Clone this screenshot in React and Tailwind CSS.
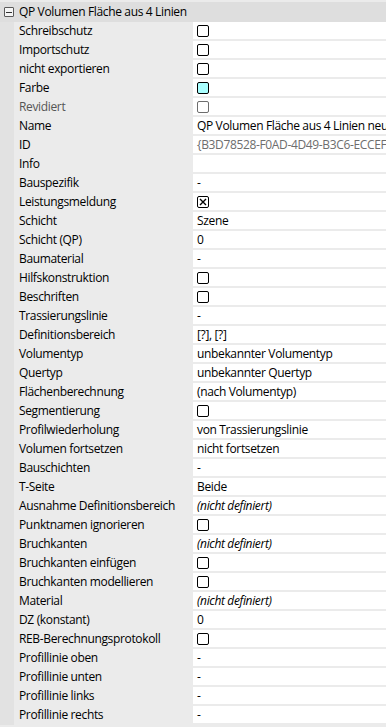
const rows = [
  { label: 'Schreibschutz', type: 'check' },
  { label: 'Importschutz', type: 'check' },
  { label: 'nicht exportieren', type: 'check' },
  { label: 'Farbe', type: 'color' },
  { label: 'Revidiert', type: 'check', disabled: true },
  { label: 'Name', value: 'QP Volumen Fläche aus 4 Linien neu' },
  { label: 'ID', value: '{B3D78528-F0AD-4D49-B3C6-ECCEF7A1B2C4}', disabled: true },
  { label: 'Info', value: '' },
  { label: 'Bauspezifik', value: '-' },
  { label: 'Leistungsmeldung', type: 'checked' },
  { label: 'Schicht', value: 'Szene' },
  { label: 'Schicht (QP)', value: '0' },
  { label: 'Baumaterial', value: '-' },
  { label: 'Hilfskonstruktion', type: 'check' },
  { label: 'Beschriften', type: 'check' },
  { label: 'Trassierungslinie', value: '-' },
  { label: 'Definitionsbereich', value: '[?], [?]' },
  { label: 'Volumentyp', value: 'unbekannter Volumentyp' },
  { label: 'Quertyp', value: 'unbekannter Quertyp' },
  { label: 'Flächenberechnung', value: '(nach Volumentyp)' },
  { label: 'Segmentierung', type: 'check' },
  { label: 'Profilwiederholung', value: 'von Trassierungslinie' },
  { label: 'Volumen fortsetzen', value: 'nicht fortsetzen' },
  { label: 'Bauschichten', value: '-' },
  { label: 'T-Seite', value: 'Beide' },
  { label: 'Ausnahme Definitionsbereich', value: '(nicht definiert)', italic: true },
  { label: 'Punktnamen ignorieren', type: 'check' },
  { label: 'Bruchkanten', value: '(nicht definiert)', italic: true },
  { label: 'Bruchkanten einfügen', type: 'check' },
  { label: 'Bruchkanten modellieren', type: 'check' },
  { label: 'Material', value: '(nicht definiert)', italic: true },
  { label: 'DZ (konstant)', value: '0' },
  { label: 'REB-Berechnungsprotokoll', type: 'check' },
  { label: 'Profillinie oben', value: '-' },
  { label: 'Profillinie unten', value: '-' },
  { label: 'Profillinie links', value: '-' },
  { label: 'Profillinie rechts', value: '-' },
];

function CheckBox({ disabled, fill, checked }) {
  return (
    <div
      className={`w-[12px] h-[12px] rounded-[2px] border flex items-center justify-center ${
        disabled ? 'border-[#6d6d6d]' : 'border-black'
      } ${fill ? 'bg-[#aaffff]' : 'bg-white'}`}
    >
      {checked && (
        <svg width="8" height="8" viewBox="0 0 8 8">
          <path d="M1 1 L7 7 M7 1 L1 7" stroke="black" strokeWidth="1.4" />
        </svg>
      )}
    </div>
  );
}

function Value({ row }) {
  if (row.type === 'check') return <CheckBox disabled={row.disabled} />;
  if (row.type === 'color') return <CheckBox fill />;
  if (row.type === 'checked') return <CheckBox checked />;
  return (
    <span
      className={`whitespace-nowrap ${row.italic ? 'italic' : ''} ${
        row.disabled ? 'text-[#6d6d6d]' : 'text-black'
      }`}
    >
      {row.value}
    </span>
  );
}

export default function App() {
  return (
    <div className="w-[386px] h-[727px] overflow-hidden bg-[#ebebeb] pt-[2px] text-[12px] leading-none font-['Open_Sans',sans-serif] tracking-[-0.35px]">
      {/* group header */}
      <div className="h-[20px] bg-[#dedede] flex items-center">
        <div className="w-[19px] flex justify-center pr-[1px]">
          <div className="w-[10px] h-[10px] border border-[#5a5a5a] rounded-[1px] bg-[#f4f4f4] flex items-center justify-center">
            <div className="w-[6px] h-[1px] bg-[#333]" />
          </div>
        </div>
        <span className="text-black whitespace-nowrap">QP Volumen Fläche aus 4 Linien</span>
      </div>

      <div className="flex">
        <div className="w-[14px] bg-[#e2e2e2] shrink-0" />
        <div className="flex-1 min-w-0">
          {rows.map((row) => (
            <div key={row.label} className="h-[19px] flex">
              <div
                className={`w-[179px] shrink-0 pl-[5px] flex items-center h-[17px] whitespace-nowrap ${
                  row.disabled && row.type ? 'text-[#555]' : 'text-black'
                }`}
              >
                {row.label}
              </div>
              <div className="flex-1 min-w-0 h-[17px] bg-white flex items-center pl-[4px] overflow-hidden">
                <Value row={row} />
              </div>
            </div>
          ))}
        </div>
      </div>
    </div>
  );
}
